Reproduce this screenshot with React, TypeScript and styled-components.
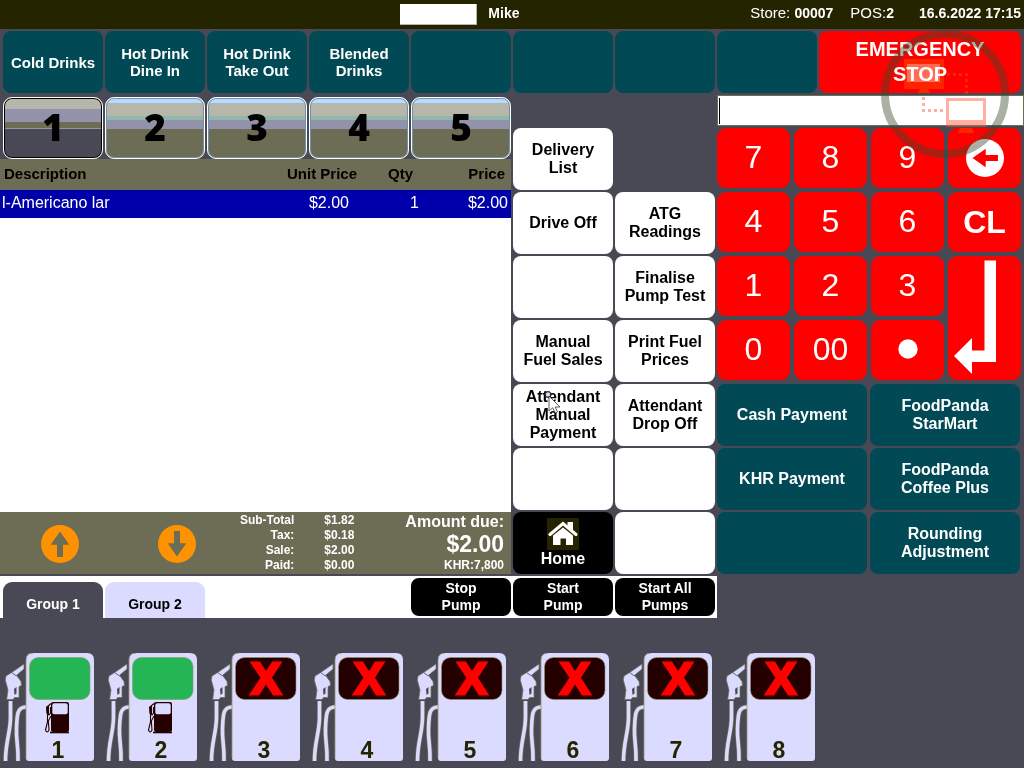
import React from "react";
import styled, { createGlobalStyle, css } from "styled-components";

const color = {
  slate: "#494955",
  bar: "#242400",
  teal: "#004955",
  olive: "#6d6d55",
  navy: "#0000aa",
  lavender: "#dbdbff",
  green: "#24b655",
  orange: "#ff9200",
  red: "#ff0000",
  maroon: "#240000",
};

const GlobalStyle = createGlobalStyle`
  * { box-sizing: border-box; }
  body {
    margin: 0;
    background: ${color.slate};
    font-family: "Liberation Sans", Arial, sans-serif;
  }
  button, input { font-family: inherit; }
  button { padding: 0; border: 0; cursor: pointer; }
  svg { display: block; }
`;

const Screen = styled.div`
  position: relative;
  min-height: 100vh;
  background: ${color.slate};
`;

const TopBar = styled.header`
  display: flex;
  align-items: center;
  height: 29px;
  padding: 0 3px 4px 39%;
  background: ${color.bar};
  color: #fff;
  font-size: 14px;
  line-height: 16px;
  white-space: nowrap;
`;

const UserBadge = styled.div`
  width: 77px;
  height: 21px;
  margin: 4px 11px 0 1px;
  background: #fff;
  border: solid #b6b6aa;
  border-width: 0 1px 1px 0;
`;

const Status = styled.div`
  display: flex;
  gap: 17px;
  margin-left: auto;
`;

const Reading = styled.span`
  font-size: 15px;

  b { font-size: 14px; }
`;

const Clock = styled.time`
  margin-left: 8px;
  font-weight: bold;
`;

const CategoryRow = styled.nav`
  display: grid;
  grid-template-columns: repeat(10, 1fr);
  gap: 2px;
  padding: 2px 3px;
`;

const tones = {
  teal: css`background: ${color.teal}; color: #fff;`,
  white: css`background: #fff; color: #000;`,
  black: css`background: #000; color: #fff;`,
};

const Tile = styled.button<{ $tone: keyof typeof tones; $size?: "compact" | "normal" }>`
  position: relative;
  display: flex;
  flex-direction: column;
  align-items: center;
  justify-content: center;
  height: 62px;
  border-radius: 8px;
  font-size: ${(p) => (p.$size === "compact" ? 15 : 16)}px;
  line-height: ${(p) => (p.$size === "compact" ? 17 : 18)}px;
  font-weight: bold;
  white-space: pre-line;
  ${(p) => tones[p.$tone]}
`;

const EmergencyButton = styled.button`
  grid-column: span 2;
  border-radius: 8px;
  background: ${color.red};
  color: #fff;
  font-size: 20px;
  line-height: 25px;
  font-weight: bold;
  white-space: pre-line;
`;

const Main = styled.main`
  display: grid;
  grid-template-columns: 511fr 206fr 307fr;
`;

const SalePanel = styled.section`
  display: flex;
  flex-direction: column;
  min-width: 0;
  padding-top: 2px;
`;

const PageTabs = styled.div`
  display: grid;
  grid-template-columns: repeat(5, 1fr);
  gap: 2px;
  padding-left: 3px;
`;

const PageTab = styled.button<{ $active: boolean }>`
  height: 62px;
  padding-bottom: 3px;
  border: 1px solid #fff;
  border-radius: 9px;
  color: #000;
  font-family: "Open Sans", "Liberation Sans", sans-serif;
  font-size: 37px;
  line-height: 56px;
  font-weight: 800;
  ${(p) =>
    p.$active
      ? css`
          box-shadow: inset 0 0 0 1px #000;
          background: linear-gradient(
            #b6b6aa 11px, #9292aa 11px, #9292aa 24px, ${color.olive} 24px,
            ${color.olive} 30px, #9292aa 30px, #9292aa 31px, ${color.slate} 31px
          );
        `
      : css`
          box-shadow: inset 0 0 0 1px #6d92aa;
          background: linear-gradient(
            #b6dbff 5px, #b6b6aa 5px, #b6b6aa 18px, #92b6aa 18px,
            #92b6aa 22px, #9292aa 22px, #9292aa 31px, ${color.olive} 31px
          );
        `}
`;

const SaleList = styled.div`
  flex: 1;
  background: #fff;
`;

const SaleTable = styled.table`
  width: 100%;
  table-layout: fixed;
  border-collapse: collapse;
  text-align: right;
  white-space: nowrap;

  th, td { padding: 0; }
  th {
    height: 31px;
    padding-bottom: 2px;
    background: ${color.olive};
    color: #000;
    font-size: 15px;
    line-height: 18px;
  }
  td {
    height: 28px;
    padding-bottom: 3px;
    background: ${color.navy};
    color: #fff;
    font-size: 16px;
    line-height: 18px;
  }
  th:nth-child(1) { text-align: left; padding-left: 4px; }
  td:nth-child(1) { text-align: left; padding-left: 2px; }
  th:nth-child(2) { width: 100px; padding-right: 3px; }
  td:nth-child(2) { padding-right: 11px; }
  th:nth-child(3) { width: 60px; padding-right: 7px; }
  td:nth-child(3) { padding-right: 1px; }
  th:nth-child(4) { width: 91px; padding-right: 6px; }
  td:nth-child(4) { padding-right: 3px; }
`;

const Totals = styled.footer`
  display: flex;
  height: 62px;
  padding: 1px 7px 0 0;
  background: ${color.olive};
  color: #fff;
  font-size: 12px;
  line-height: 15px;
  font-weight: bold;
  white-space: nowrap;
`;

const Scrollers = styled.div`
  display: flex;
  align-items: center;
  gap: 79px;
  padding-left: 41px;
`;

const ScrollButton = styled.button`
  background: none;
`;

const Breakdown = styled.dl`
  display: grid;
  grid-template-columns: auto auto;
  align-content: start;
  column-gap: 30px;
  margin: 0 0 0 auto;
  padding-right: 51px;
  text-align: right;

  dd { margin: 0; }
`;

const AmountDue = styled.div`
  display: flex;
  flex-direction: column;
  text-align: right;
`;

const DueLabel = styled.span`
  font-size: 16px;
  line-height: 17px;
`;

const DueValue = styled.strong`
  font-size: 23px;
  line-height: 28px;
`;

const ActionGrid = styled.section`
  display: grid;
  grid-template-columns: 1fr 1fr;
  gap: 2px;
  padding: 33px 2px 0;
`;

const PayPanel = styled.section`
  display: flex;
  flex-direction: column;
`;

const EntryField = styled.label`
  display: flex;
  align-items: center;
  height: 31px;
  padding-left: 1px;
  background: #fff;
  border: 1px solid ${color.olive};
`;

const Caret = styled.span`
  width: 1px;
  height: 26px;
  background: #000;
`;

const EntryInput = styled.input`
  flex: 1;
  min-width: 0;
  padding: 0 4px;
  border: 0;
  outline: 0;
  background: none;
  font-size: 16px;
`;

const Keypad = styled.div`
  display: grid;
  grid-template-columns: repeat(4, 1fr);
  grid-auto-rows: 60px;
  gap: 4px;
  padding: 2px 3px 4px 0;
`;

const Key = styled.button<{ $bold?: boolean; $tall?: boolean; $digit?: boolean }>`
  display: flex;
  align-items: center;
  justify-content: center;
  grid-row: span ${(p) => (p.$tall ? 2 : 1)};
  padding-bottom: ${(p) => (p.$digit ? 2 : 0)}px;
  border-radius: 9px;
  background: ${color.red};
  color: #fff;
  font-size: 32px;
  line-height: 36px;
  font-weight: ${(p) => (p.$bold ? "bold" : "normal")};
`;

const Payments = styled.div`
  display: grid;
  grid-template-columns: 1fr 1fr;
  gap: 2px 3px;
  padding-right: 4px;
`;

const ForecourtBar = styled.div`
  display: grid;
  grid-template-columns: 717fr 307fr;
  padding-top: 2px;
`;

const ForecourtControls = styled.div`
  display: grid;
  grid-template-columns: repeat(7, 1fr);
  column-gap: 2px;
  height: 42px;
  padding: 2px 2px 0 3px;
  background: #fff;
`;

const GroupTab = styled.button<{ $active?: boolean }>`
  height: 36px;
  margin-top: 4px;
  padding-top: 8px;
  border-radius: 9px 9px 0 0;
  background: ${(p) => (p.$active ? color.slate : color.lavender)};
  color: ${(p) => (p.$active ? "#fff" : "#000")};
  font-size: 14px;
  font-weight: bold;
`;

const PumpCommand = styled.button<{ $first?: boolean }>`
  grid-column-start: ${(p) => (p.$first ? 5 : "auto")};
  height: 38px;
  border-radius: 8px;
  background: #000;
  color: #fff;
  font-size: 14px;
  line-height: 17px;
  font-weight: bold;
  white-space: pre-line;
`;

const Pumps = styled.section`
  display: flex;
  gap: 11px;
  padding: 35px 0 0 3px;
`;

const PumpButton = styled.button`
  background: none;
`;

const RemoteBadge = styled.svg<{ $blend?: string }>`
  position: absolute;
  top: 30px;
  right: 15px;
  pointer-events: none;
  mix-blend-mode: ${(p) => p.$blend ?? "normal"};
`;

const Pointer = styled.svg`
  position: absolute;
  top: 7px;
  left: 31px;
  pointer-events: none;
`;

const ArrowIcon = ({ disc, arrow, turn }: { disc: string; arrow: string; turn: number }) => (
  <svg width="38" height="38" viewBox="0 0 38 38" aria-hidden="true">
    <circle cx="19" cy="19" r="19" fill={disc} />
    <path
      d="M19 6.5 28.3 19.7H22V32H16V19.7H9.7Z"
      fill={arrow}
      transform={`rotate(${turn} 19 19)`}
    />
  </svg>
);

const HomeIcon = () => (
  <svg width="32" height="32" viewBox="0 0 32 32" aria-hidden="true">
    <rect width="32" height="32" fill={color.bar} />
    <path d="M20.5 4H26V13L20.5 8Z" fill="#fff" />
    <path d="M3 16.5 16 5.5 29 16.5" fill="none" stroke="#fff" strokeWidth="3.2" strokeLinecap="round" />
    <path d="M6 17.5 16 9.5 26 17.5V27H19V20.5H13.5V27H6Z" fill="#fff" />
  </svg>
);

const EnterIcon = () => (
  <svg width="73" height="124" viewBox="0 0 73 124" aria-hidden="true">
    <path d="M36.5 4.5H48V106H24V118L6 100 24 82V94.5H36.5Z" fill="#fff" />
  </svg>
);

const PumpDrawing = ({ id, ready }: { id: number; ready: boolean }) => (
  <svg width="92" height="115" viewBox="0 0 92 115" aria-hidden="true">
    <g fill="none" stroke="#6d6d55" strokeWidth="5">
      <path d="M7.5 48V64C7.5 80 2.5 88 2.5 108" />
      <path d="M23 54C14 54 14 62 13.5 76 13 88 15.5 92 15 108" />
    </g>
    <g fill="none" stroke={color.lavender} strokeWidth="3.6">
      <path d="M7.5 48V64C7.5 80 2.5 88 2.5 108" />
      <path d="M23 54C14 54 14 62 13.5 76 13 88 15.5 92 15 108" />
    </g>
    <path
      d="M21 11 9 19.3 3 23 2.3 27 5 37 3.7 46.5H10L11.5 44.5H16V33.5L18.5 32.5 18 28.5 13.5 22.3 21 16Z"
      fill={color.lavender}
      stroke="#6d6d55"
      strokeWidth="0.7"
    />
    <path d="M8.5 19.5 13.5 23" stroke={color.slate} strokeWidth="0.8" />
    <path d="M11 36 13.5 34V40.5L11.5 42Z" fill={color.slate} />
    <path d="M30 0H84Q91 0 91 7V105Q91 108 88 108H26Q23 108 23 105V7Q23 0 30 0Z" fill={color.lavender} />
    <path d="M30 0Q23 0 23 7V105" fill="none" stroke="#92926d" strokeWidth="0.8" />
    <rect x="26.5" y="4.5" width="60.5" height="42" rx="9" fill={ready ? color.green : color.maroon} stroke="#92926d" strokeWidth="0.6" />
    {ready ? (
      <g>
        <rect x="48" y="49" width="18" height="30" rx="2" fill={color.maroon} />
        <rect x="49.3" y="50.3" width="15.4" height="11" rx="2" fill={color.lavender} />
        <path d="M47 79.5H66" stroke={color.maroon} strokeWidth="1.6" />
        <path
          d="M48 50.5 44 54V60L46 62 47.5 60V54M44.5 62V69L42.5 77Q44 81 46 77L45.3 68 48 63"
          fill="none"
          stroke={color.maroon}
          strokeWidth="1.1"
        />
        <path d="M43 54 46 52V62H44Z" fill={color.maroon} />
      </g>
    ) : (
      <text
        x="57"
        y="41"
        textAnchor="middle"
        fontFamily="'Liberation Sans Narrow', 'Liberation Sans', sans-serif"
        fontSize="45"
        fontWeight="bold"
        fill={color.red}
        stroke={color.red}
        strokeWidth="3"
      >
        X
      </text>
    )}
    <text x="55" y="105" textAnchor="middle" fontSize="23" fontWeight="bold" fill={color.bar}>
      {id}
    </text>
  </svg>
);

const categories = ["Cold Drinks", "Hot Drink\nDine In", "Hot Drink\nTake Out", "Blended\nDrinks", "", "", "", ""];

const actions: (string | null)[] = [
  "Delivery\nList", null,
  "Drive Off", "ATG\nReadings",
  "", "Finalise\nPump Test",
  "Manual\nFuel Sales", "Print Fuel\nPrices",
  "Attendant\nManual\nPayment", "Attendant\nDrop Off",
  "", "",
];

const payments = [
  "Cash Payment", "FoodPanda\nStarMart",
  "KHR Payment", "FoodPanda\nCoffee Plus",
  "", "Rounding\nAdjustment",
];

const breakdown = [
  ["Sub-Total", "$1.82"],
  ["Tax:", "$0.18"],
  ["Sale:", "$2.00"],
  ["Paid:", "$0.00"],
];

export default function App() {
  return (
    <Screen>
      <GlobalStyle />
      <TopBar>
        <UserBadge />
        <strong>Mike</strong>
        <Status>
          <Reading>Store: <b>00007</b></Reading>
          <Reading>POS:<b>2</b></Reading>
          <Clock>16.6.2022 17:15</Clock>
        </Status>
      </TopBar>

      <CategoryRow>
        {categories.map((name, i) => (
          <Tile key={i} $tone="teal" $size="compact">{name}</Tile>
        ))}
        <EmergencyButton>{"EMERGENCY\nSTOP"}</EmergencyButton>
      </CategoryRow>

      <Main>
        <SalePanel>
          <PageTabs>
            {[1, 2, 3, 4, 5].map((n) => (
              <PageTab key={n} $active={n === 1}>{n}</PageTab>
            ))}
          </PageTabs>
          <SaleList>
            <SaleTable>
              <thead>
                <tr><th>Description</th><th>Unit Price</th><th>Qty</th><th>Price</th></tr>
              </thead>
              <tbody>
                <tr><td>l-Americano lar</td><td>$2.00</td><td>1</td><td>$2.00</td></tr>
              </tbody>
            </SaleTable>
          </SaleList>
          <Totals>
            <Scrollers>
              <ScrollButton aria-label="Scroll up">
                <ArrowIcon disc={color.orange} arrow={color.olive} turn={0} />
              </ScrollButton>
              <ScrollButton aria-label="Scroll down">
                <ArrowIcon disc={color.orange} arrow={color.olive} turn={180} />
              </ScrollButton>
            </Scrollers>
            <Breakdown>
              {breakdown.map(([label, value]) => (
                <React.Fragment key={label}>
                  <dt>{label}</dt>
                  <dd>{value}</dd>
                </React.Fragment>
              ))}
            </Breakdown>
            <AmountDue>
              <DueLabel>Amount due:</DueLabel>
              <DueValue>$2.00</DueValue>
              <span>KHR:7,800</span>
            </AmountDue>
          </Totals>
        </SalePanel>

        <ActionGrid>
          {actions.map((name, i) =>
            name === null ? (
              <span key={i} />
            ) : (
              <Tile key={i} $tone="white">
                {name}
                {name.includes("Manual\nPayment") && (
                  <Pointer width="20" height="24" viewBox="0 0 20 24" aria-hidden="true">
                    <circle cx="4" cy="3.5" r="2.8" fill="#dbdbff" stroke="#242424" strokeWidth="1.2" />
                    <path d="M5 5V20L8.7 16.8 11.3 22 13.5 21 11.2 16H16Z" fill="#fff" stroke="#494949" strokeWidth="0.9" />
                  </Pointer>
                )}
              </Tile>
            )
          )}
          <Tile $tone="black">
            <HomeIcon />
            Home
          </Tile>
          <Tile $tone="white" />
        </ActionGrid>

        <PayPanel>
          <EntryField>
            <Caret />
            <EntryInput type="text" aria-label="Entry" />
          </EntryField>
          <Keypad>
            <Key $digit>7</Key>
            <Key $digit>8</Key>
            <Key $digit>9</Key>
            <Key aria-label="Backspace">
              <ArrowIcon disc="#fff" arrow={color.red} turn={-90} />
            </Key>
            <Key $digit>4</Key>
            <Key $digit>5</Key>
            <Key $digit>6</Key>
            <Key $bold>CL</Key>
            <Key $digit>1</Key>
            <Key $digit>2</Key>
            <Key $digit>3</Key>
            <Key $tall aria-label="Enter">
              <EnterIcon />
            </Key>
            <Key $digit>0</Key>
            <Key $digit>00</Key>
            <Key $digit aria-label="Decimal point">
              <svg width="20" height="20" viewBox="0 0 20 20" aria-hidden="true">
                <circle cx="10" cy="10" r="9.7" fill="#fff" />
              </svg>
            </Key>
          </Keypad>
          <Payments>
            {payments.map((name, i) => (
              <Tile key={i} $tone="teal">{name}</Tile>
            ))}
          </Payments>
        </PayPanel>
      </Main>

      <ForecourtBar>
        <ForecourtControls>
          <GroupTab $active>Group 1</GroupTab>
          <GroupTab>Group 2</GroupTab>
          <PumpCommand $first>{"Stop\nPump"}</PumpCommand>
          <PumpCommand>{"Start\nPump"}</PumpCommand>
          <PumpCommand>{"Start All\nPumps"}</PumpCommand>
        </ForecourtControls>
      </ForecourtBar>

      <Pumps>
        {[1, 2, 3, 4, 5, 6, 7, 8].map((id) => (
          <PumpButton key={id} aria-label={`Pump ${id}`}>
            <PumpDrawing id={id} ready={id < 3} />
          </PumpButton>
        ))}
      </Pumps>

      <RemoteBadge width="128" height="128" viewBox="0 0 128 128" aria-hidden="true">
        <circle cx="64" cy="64" r="60" fill="none" stroke="rgba(60,72,45,0.43)" strokeWidth="8" />
        <path d="M79 98H91L93 103H77Z" fill="rgba(255,73,0,0.5)" />
        <path d="M65 68H105V97H65ZM68 71V90H102V71Z" fillRule="evenodd" fill="rgba(255,80,50,0.45)" />
        <path d="M42.5 67V80.5H65" fill="none" stroke="rgba(255,80,50,0.45)" strokeWidth="3" strokeDasharray="3 3" />
      </RemoteBadge>
      {/* The upper monitor lightens the red button but leaves its white label untinted. */}
      <RemoteBadge $blend="screen" width="128" height="128" viewBox="0 0 128 128" aria-hidden="true">
        <path d="M23 29H63V59H23ZM26 34V52H59V34Z" fillRule="evenodd" fill="#002400" />
        <path d="M39 59H47L49 63H37Z" fill="#002400" />
        <rect x="26" y="34" width="33" height="18" fill="#006d55" />
        <path d="M66 44.5H85.5V66" fill="none" stroke="#002400" strokeWidth="3" strokeDasharray="3 3" />
      </RemoteBadge>
    </Screen>
  );
}
